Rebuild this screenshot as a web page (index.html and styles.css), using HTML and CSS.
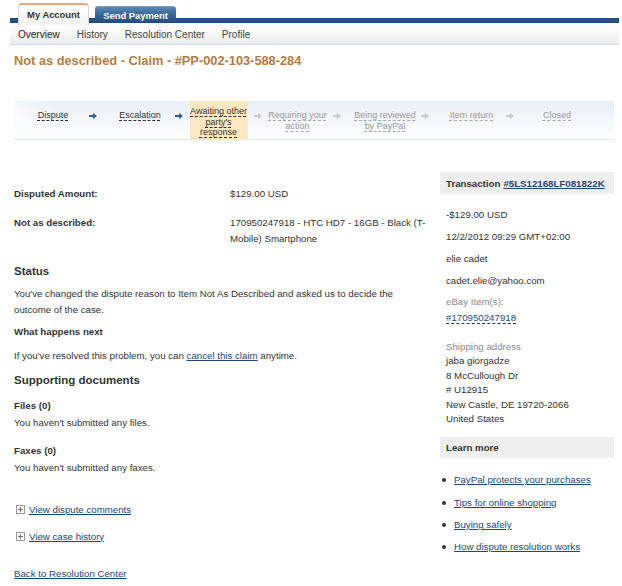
FILE: index.html
```html
<!DOCTYPE html>
<html lang="en">
<head>
<meta charset="utf-8">
<title>Resolution Center - Claim</title>
<link rel="stylesheet" href="styles.css">
</head>
<body>
<header class="masthead">
  <nav class="tabs">
    <a class="tab tab-active">My Account</a>
    <a class="tab tab-blue">Send Payment</a>
  </nav>
  <nav class="subnav">
    <a class="subnav-item current">Overview</a>
    <a class="subnav-item">History</a>
    <a class="subnav-item">Resolution Center</a>
    <a class="subnav-item">Profile</a>
  </nav>
</header>

<main class="page">
  <h1 class="title">Not as described - Claim - #PP-002-103-588-284</h1>

  <ol class="progress">
    <li class="step done"><span class="label"><span class="u">Dispute</span></span></li>
    <li class="arrow on"><svg viewBox="0 0 8 6" width="8" height="6"><path d="M0 2H4V0L8 3L4 6V4H0Z"/></svg></li>
    <li class="step done shift"><span class="label"><span class="u">Escalation</span></span></li>
    <li class="arrow on"><svg viewBox="0 0 8 6" width="8" height="6"><path d="M0 2H4V0L8 3L4 6V4H0Z"/></svg></li>
    <li class="step done current"><span class="label"><span class="u">Awaiting other</span><br><span class="u">party's</span><br><span class="u">response</span></span></li>
    <li class="arrow"><svg viewBox="0 0 8 6" width="8" height="6"><path d="M0 2H4V0L8 3L4 6V4H0Z"/></svg></li>
    <li class="step"><span class="label"><span class="u">Requiring your</span><br><span class="u">action</span></span></li>
    <li class="arrow"><svg viewBox="0 0 8 6" width="8" height="6"><path d="M0 2H4V0L8 3L4 6V4H0Z"/></svg></li>
    <li class="step shift"><span class="label"><span class="u">Being reviewed</span><br><span class="u">by PayPal</span></span></li>
    <li class="arrow"><svg viewBox="0 0 8 6" width="8" height="6"><path d="M0 2H4V0L8 3L4 6V4H0Z"/></svg></li>
    <li class="step shift"><span class="label"><span class="u">Item return</span></span></li>
    <li class="arrow"><svg viewBox="0 0 8 6" width="8" height="6"><path d="M0 2H4V0L8 3L4 6V4H0Z"/></svg></li>
    <li class="step"><span class="label"><span class="u">Closed</span></span></li>
  </ol>

  <div class="layout">
    <section class="content">
      <div class="detail-row">
        <div class="detail-label">Disputed Amount:</div>
        <div class="detail-value">$129.00 USD</div>
      </div>
      <div class="detail-row second">
        <div class="detail-label">Not as described:</div>
        <div class="detail-value">170950247918 - HTC HD7 - 16GB - Black (T-Mobile) Smartphone</div>
      </div>

      <h2 class="heading status-h">Status</h2>
      <p class="para status-p">You've changed the dispute reason to Item Not As Described and asked us to decide the outcome of the case.</p>
      <h3 class="subheading next-h">What happens next</h3>
      <p class="para next-p">If you've resolved this problem, you can <a class="link">cancel this claim</a> anytime.</p>

      <h2 class="heading docs-h">Supporting documents</h2>
      <h3 class="subheading files-h">Files (0)</h3>
      <p class="para tight">You haven't submitted any files.</p>
      <h3 class="subheading faxes-h">Faxes (0)</h3>
      <p class="para tight">You haven't submitted any faxes.</p>

      <div class="expander comments"><svg class="plus" viewBox="0 0 9 9" width="9" height="9"><rect x="0.5" y="0.5" width="8" height="8" fill="#fff" stroke="#9a9a9a"/><path d="M2 4.5H7M4.5 2V7" stroke="#777" stroke-width="1"/></svg><a class="link">View dispute comments</a></div>
      <div class="expander history"><svg class="plus" viewBox="0 0 9 9" width="9" height="9"><rect x="0.5" y="0.5" width="8" height="8" fill="#fff" stroke="#9a9a9a"/><path d="M2 4.5H7M4.5 2V7" stroke="#777" stroke-width="1"/></svg><a class="link">View case history</a></div>

      <p class="back"><a class="link">Back to Resolution Center</a></p>
    </section>

    <aside class="sidebar">
      <div class="box-head">Transaction <a class="link strong">#5LS12168LF081822K</a></div>
      <div class="side-line amount">-$129.00 USD</div>
      <div class="side-line gap">12/2/2012 09:29 GMT+02:00</div>
      <div class="side-line gap">elie cadet</div>
      <div class="side-line gap">cadet.elie@yahoo.com</div>
      <div class="side-line muted ebay">eBay Item(s):</div>
      <div class="side-line"><a class="dlink">#170950247918</a></div>

      <div class="address">
        <div class="muted">Shipping address</div>
        <div>jaba giorgadze</div>
        <div>8 McCullough Dr</div>
        <div># U12915</div>
        <div>New Castle, DE 19720-2066</div>
        <div>United States</div>
      </div>

      <div class="box-head learn">Learn more</div>
      <ul class="learn-list">
        <li><a class="link">PayPal protects your purchases</a></li>
        <li><a class="link">Tips for online shopping</a></li>
        <li><a class="link">Buying safely</a></li>
        <li><a class="link">How dispute resolution works</a></li>
      </ul>
    </aside>
  </div>
</main>
</body>
</html>
```

FILE: styles.css
```css
* { box-sizing: border-box; }

body {
  margin: 0;
  font-family: "Liberation Sans", Arial, sans-serif;
  font-size: 9.7px;
  color: #333;
  background: #fff;
}

a { cursor: pointer; }

/* ---------- header ---------- */
.masthead {
  margin: 0 3px 0 10px;
}

.tabs {
  display: flex;
  align-items: flex-end;
  height: 24px;
  padding-left: 8px;
  background: linear-gradient(to bottom, transparent 18px, #1d4776 18px, #2a5683 20px, #1d4776 23px, transparent 23px);
}

.tab {
  display: flex;
  align-items: center;
  justify-content: center;
  font-weight: bold;
  font-size: 9.4px;
  text-decoration: none;
}

.tab-active {
  width: 71px;
  height: 22px;
  padding-bottom: 1px;
  color: #333;
  background: linear-gradient(#ffffff, #f4f4f4);
  border: 1px solid #d9d9d9;
  border-top: 2px solid #e7a77f;
  border-bottom: none;
  border-radius: 4px 4px 0 0;
  position: relative;
  z-index: 1;
  margin-bottom: -1px;
}

.tab-blue {
  width: 81px;
  height: 17px;
  margin-left: 6px;
  margin-bottom: 1px;
  color: #fff;
  background: linear-gradient(#5b88b6, #3b6898 45%, #1f4b7b);
  border-top: 1px solid #7fa3c8;
  border-radius: 3px 3px 0 0;
}

.subnav {
  display: flex;
  align-items: center;
  gap: 17px;
  height: 21px;
  padding-left: 8px;
  background: linear-gradient(#ffffff, #f9f9f9 45%, #ebebeb);
  border-bottom: 1px solid #d3dbe6;
}

.subnav-item {
  font-size: 10px;
  color: #444;
  text-decoration: none;
}

.subnav-item.current { color: #222; }

/* ---------- page ---------- */
.page {
  padding: 0 8px 0 14px;
}

.title {
  margin: 8px 0 0;
  font-size: 12.8px;
  line-height: 16px;
  font-weight: bold;
  color: #b87b3e;
}

/* ---------- progress ---------- */
.progress {
  list-style: none;
  margin: 32px 0 0;
  padding: 0 0 0 3px;
  height: 39px;
  display: grid;
  grid-template-columns: 72px 8px 78px 8px 71px 8px 71px 8px 80px 8px 77px 8px 86px;
  background: linear-gradient(to right, rgba(255,255,255,0.6), rgba(255,255,255,0) 40px),
              linear-gradient(#e9eff5, #f6f9fb 60%, #ffffff);
  border-bottom: 1px solid #e6e8ea;
}

.step {
  display: flex;
  justify-content: center;
  font-size: 9px;
  line-height: 10.5px;
  color: #999;
  text-align: center;
}

.step.done { color: #333; }
.step.shift { padding-left: 8px; }

.label {
  padding-top: 9px;
}

.step.current .label {
  width: 58px;
  padding-top: 5px;
  background: #fde8c3;
}

.u {
  text-decoration: underline dashed;
  text-decoration-color: #aaa;
  text-underline-offset: 2px;
}

.step.done .u { text-decoration-color: #333; }

.arrow {
  display: flex;
  justify-content: center;
  padding-top: 12px;
}

.arrow svg { fill: #c6c9cc; }
.arrow.on svg { fill: #2f628f; }

/* ---------- layout ---------- */
.layout {
  display: grid;
  grid-template-columns: 420px 174px;
  column-gap: 6px;
  margin-top: 32px;
}

.content {
  padding-top: 14px;
}

.detail-row {
  display: grid;
  grid-template-columns: 216px 1fr;
  line-height: 16px;
}

.detail-row.second { margin-top: 13px; }

.detail-label { font-weight: bold; }

.heading {
  margin: 0;
  font-size: 11.5px;
  line-height: 16px;
  font-weight: bold;
  color: #333;
}

.subheading {
  margin: 0;
  font-size: 9.7px;
  line-height: 16px;
  font-weight: bold;
  color: #333;
}

.para {
  margin: 0;
  line-height: 16px;
}

.status-h { margin-top: 16px; }
.status-p { margin-top: 7px; max-width: 400px; }
.next-h { margin-top: 6px; }
.next-p { margin-top: 8px; }
.docs-h { margin-top: 8px; }
.files-h { margin-top: 10px; }
.faxes-h { margin-top: 12px; }
.para.tight { margin-top: 1px; }

.link {
  color: #22467a;
  text-decoration: underline;
}

.link.strong { font-weight: bold; }

.expander {
  display: flex;
  align-items: center;
  gap: 4px;
  height: 16px;
  padding-left: 2px;
}

.expander.comments { margin-top: 25px; }
.expander.history { margin-top: 11px; }

.plus { flex: none; }

.back {
  margin: 22px 0 0;
  line-height: 16px;
}

/* ---------- sidebar ---------- */
.box-head {
  height: 22px;
  display: flex;
  align-items: center;
  gap: 3px;
  padding-left: 6px;
  background: #efefef;
  font-weight: bold;
  color: #333;
}

.side-line {
  padding-left: 6px;
  line-height: 16px;
}

.side-line.amount { margin-top: 13px; }
.side-line.gap { margin-top: 6px; }
.side-line.ebay { margin-top: 5px; }

.muted { color: #8a8a8a; }

.dlink {
  color: #2a4d7c;
  text-decoration: underline dashed;
  text-decoration-color: #333;
  text-underline-offset: 2px;
}

.address {
  margin-top: 14px;
  padding-left: 6px;
  line-height: 14.4px;
}

.box-head.learn {
  margin-top: 11px;
  height: 21px;
}

.learn-list {
  list-style: none;
  margin: 14px 0 0;
  padding: 0;
}

.learn-list li {
  display: flex;
  align-items: center;
  gap: 8px;
  padding-left: 2px;
  line-height: 16px;
  margin-bottom: 6.3px;
}

.learn-list li::before {
  content: "";
  width: 4px;
  height: 4px;
  border-radius: 50%;
  background: #333;
  flex: none;
}
```
